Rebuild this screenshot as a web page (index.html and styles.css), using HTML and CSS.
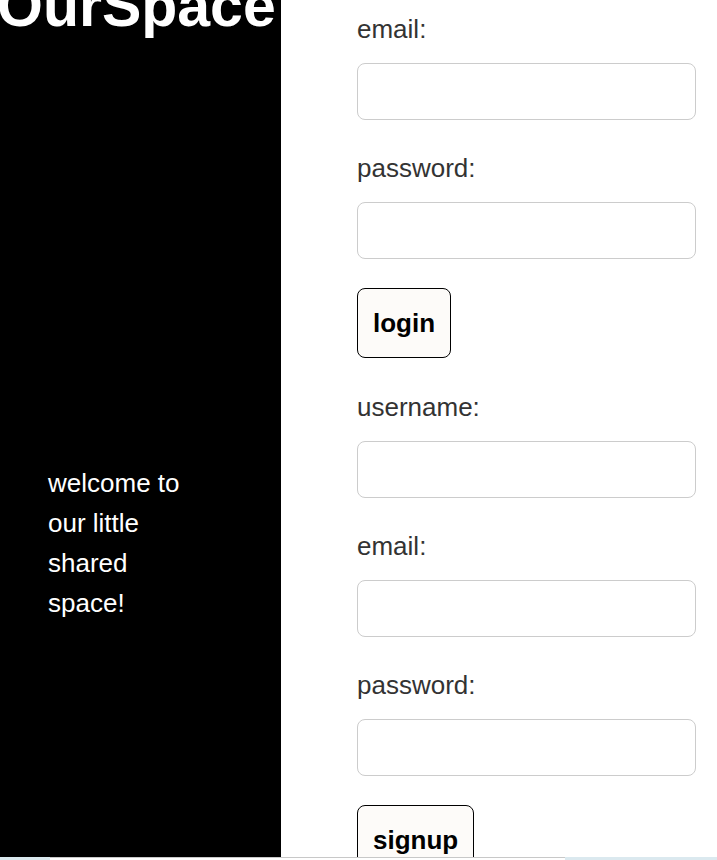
FILE: index.html
```html
<!DOCTYPE html>
<html lang="en">
<head>
<meta charset="utf-8">
<title>OurSpace</title>
<link rel="stylesheet" href="styles.css">
</head>
<body>
<div class="page">
  <aside class="sidebar">
    <h1 class="brand">OurSpace</h1>
    <p class="welcome">welcome to our little shared space!</p>
  </aside>
  <main class="main">
    <form class="form">
      <div class="field">
        <label class="label">email:</label>
        <input class="input" type="text">
      </div>
      <div class="field">
        <label class="label">password:</label>
        <input class="input" type="password">
      </div>
      <button class="btn" type="button">login</button>
    </form>
    <form class="form">
      <div class="field">
        <label class="label">username:</label>
        <input class="input" type="text">
      </div>
      <div class="field">
        <label class="label">email:</label>
        <input class="input" type="text">
      </div>
      <div class="field">
        <label class="label">password:</label>
        <input class="input" type="password">
      </div>
      <button class="btn" type="button">signup</button>
    </form>
  </main>
</div>
<div class="hscroll"><div class="hscroll-thumb"></div></div>
</body>
</html>
```
FILE: styles.css
```css
html, body {
  margin: 0;
  padding: 0;
  overflow: hidden;
  height: 860px;
  background: #ffffff;
  font-family: "Liberation Sans", Arial, sans-serif;
}
.page {
  display: flex;
  align-items: flex-start;
}
.sidebar {
  width: 281px;
  height: 857px;
  background: #000000;
  color: #ffffff;
  display: flex;
  flex-direction: column;
  flex-shrink: 0;
  overflow: hidden;
}
.brand {
  margin: -28px 0 0 -3px;
  font-size: 59px;
  font-weight: bold;
  text-align: left;
  white-space: nowrap;
  line-height: 69px;
}
.welcome {
  margin: 422px 0 0 48px;
  width: 150px;
  font-size: 26px;
  line-height: 40px;
}
.main {
  padding: 14px 0 0 76px;
  display: flex;
  flex-direction: column;
  gap: 34px;
}
.form {
  display: flex;
  flex-direction: column;
  gap: 33px;
  margin: 0;
}
.field {
  display: flex;
  flex-direction: column;
  gap: 19px;
}
.label {
  font-size: 26px;
  line-height: 30px;
  color: #333333;
}
.input {
  box-sizing: border-box;
  width: 339px;
  height: 57px;
  margin: 0;
  border: 1px solid #cccccc;
  border-radius: 8px;
  background: #ffffff;
}
.btn {
  align-self: flex-start;
  margin-top: -4px;
  box-sizing: border-box;
  height: 70px;
  padding: 0 15px;
  border: 1px solid #000000;
  border-radius: 8px;
  background: #fdfbf9;
  font-family: "Liberation Sans", Arial, sans-serif;
  font-size: 26px;
  font-weight: bold;
  color: #000000;
}
.hscroll {
  position: fixed;
  left: 0;
  right: 0;
  bottom: 0;
  height: 3px;
  background: #dbe9ef;
}
.hscroll-thumb {
  margin-left: 50px;
  width: 515px;
  height: 3px;
  box-sizing: border-box;
  border-top: 1px solid #c8c8c8;
  background: #ffffff;
}
```
